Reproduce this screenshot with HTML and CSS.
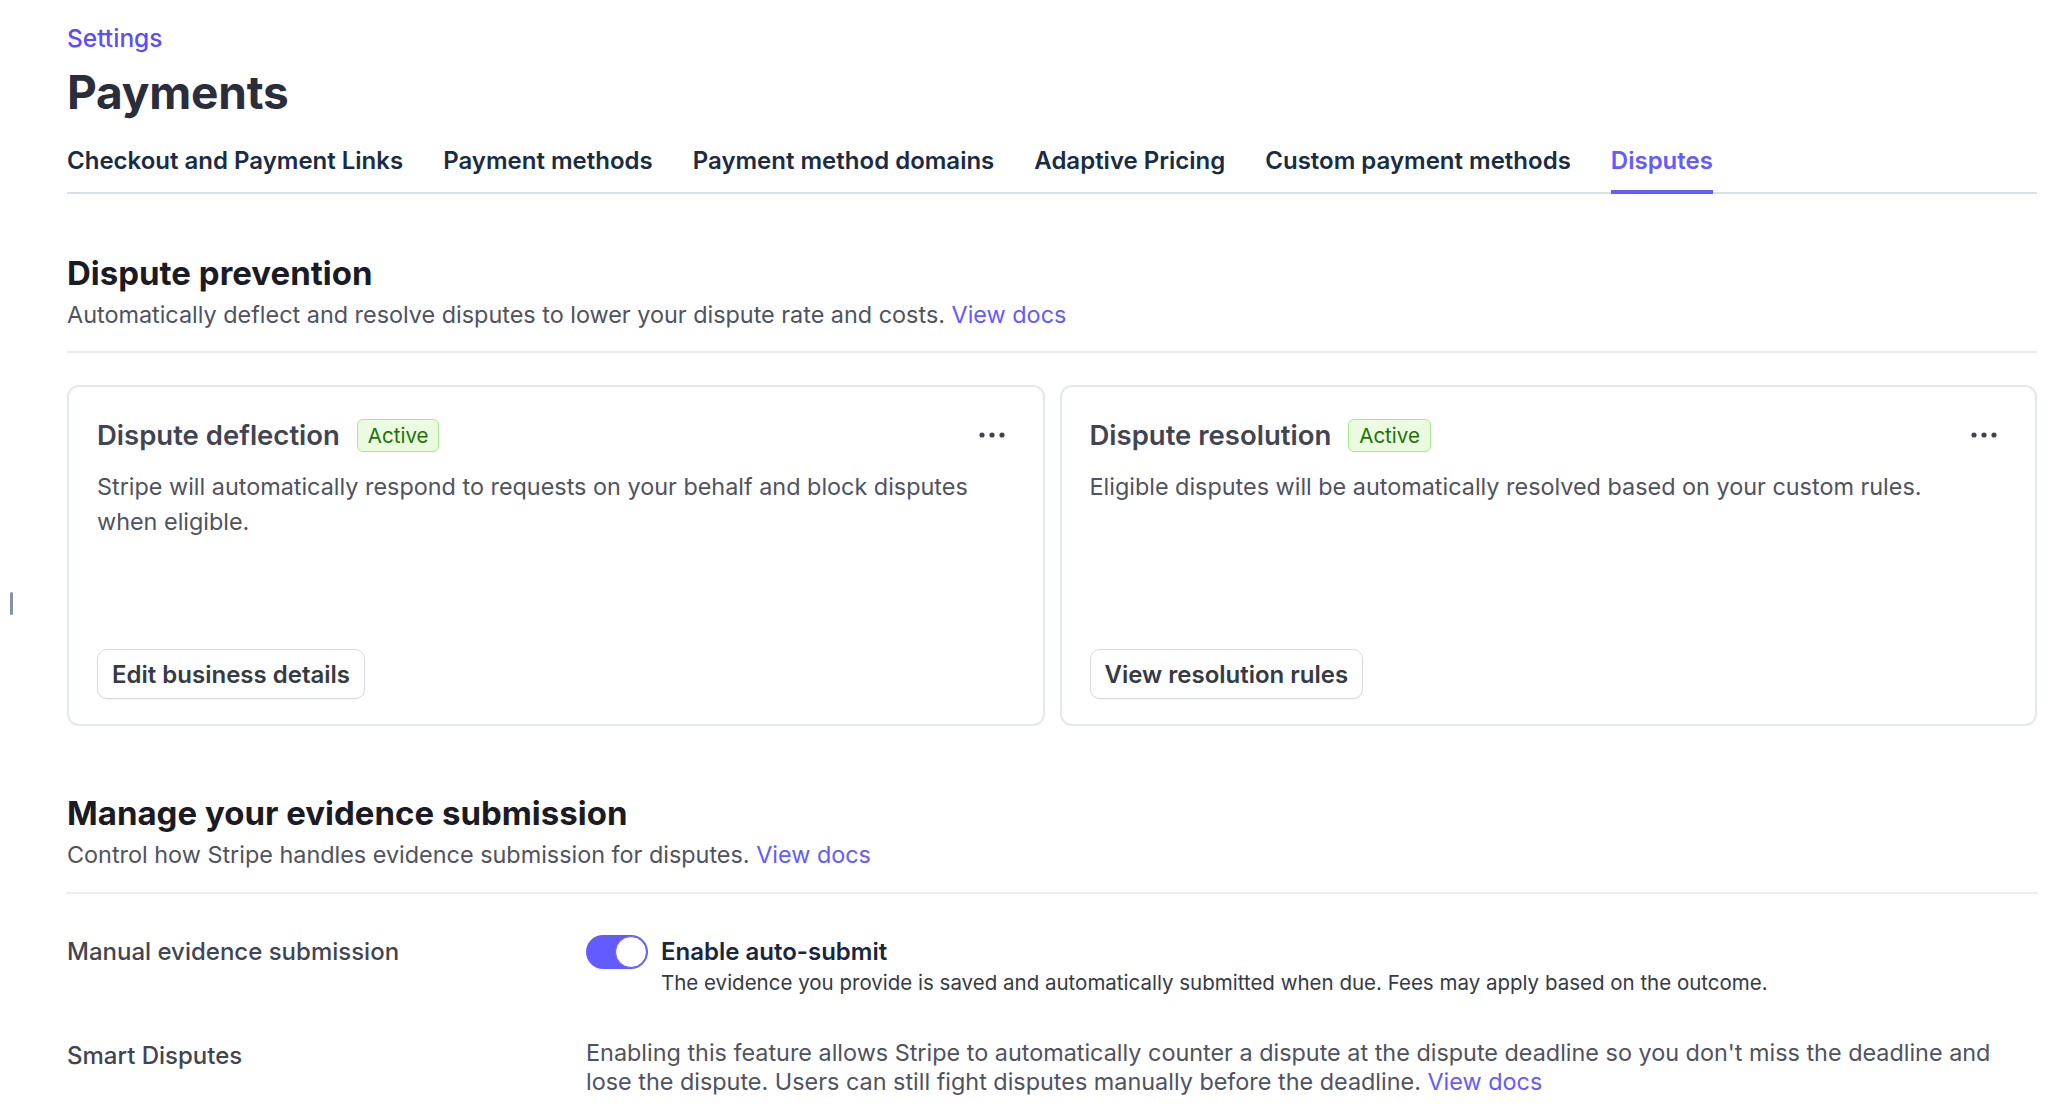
FILE: index.html
```html
<!DOCTYPE html>
<html lang="en">
<head>
    <meta charset="UTF-8">
    <meta name="viewport" content="width=device-width, initial-scale=1.0">
    <title>Payments - Disputes</title>
    <link rel="stylesheet" href="styles.css">
</head>
<body>
    <div class="resize-handle"></div>

    <main class="page">
        <a class="crumb" href="#">Settings</a>
        <h1 class="page-title">Payments</h1>

        <nav class="tabs">
            <a class="tab" href="#">Checkout and Payment Links</a>
            <a class="tab" href="#">Payment methods</a>
            <a class="tab" href="#">Payment method domains</a>
            <a class="tab" href="#">Adaptive Pricing</a>
            <a class="tab" href="#">Custom payment methods</a>
            <a class="tab active" href="#">Disputes</a>
        </nav>

        <!-- Dispute prevention -->
        <section class="section">
            <h2 class="section-title">Dispute prevention</h2>
            <p class="section-desc">Automatically deflect and resolve disputes to lower your dispute rate and costs. <a href="#">View docs</a></p>
        </section>

        <div class="cards">
            <div class="card">
                <div class="card-head">
                    <h3 class="card-title">Dispute deflection</h3>
                    <span class="badge">Active</span>
                    <button class="more" type="button" aria-label="More">
                        <svg width="26" height="6" viewBox="0 0 26 6"><circle cx="3" cy="3" r="2.6"/><circle cx="13" cy="3" r="2.6"/><circle cx="23" cy="3" r="2.6"/></svg>
                    </button>
                </div>
                <p class="card-desc">Stripe will automatically respond to requests on your behalf and block disputes when eligible.</p>
                <button class="btn" type="button">Edit business details</button>
            </div>

            <div class="card">
                <div class="card-head">
                    <h3 class="card-title">Dispute resolution</h3>
                    <span class="badge">Active</span>
                    <button class="more" type="button" aria-label="More">
                        <svg width="26" height="6" viewBox="0 0 26 6"><circle cx="3" cy="3" r="2.6"/><circle cx="13" cy="3" r="2.6"/><circle cx="23" cy="3" r="2.6"/></svg>
                    </button>
                </div>
                <p class="card-desc">Eligible disputes will be automatically resolved based on your custom rules.</p>
                <button class="btn" type="button">View resolution rules</button>
            </div>
        </div>

        <!-- Evidence submission -->
        <section class="section second">
            <h2 class="section-title">Manage your evidence submission</h2>
            <p class="section-desc">Control how Stripe handles evidence submission for disputes. <a href="#">View docs</a></p>
        </section>

        <div class="setting-row">
            <div class="setting-label">Manual evidence submission</div>
            <div class="setting-value">
                <div class="toggle-line">
                    <span class="toggle on"><span class="knob"></span></span>
                    <span class="toggle-label">Enable auto-submit</span>
                </div>
                <p class="toggle-help">The evidence you provide is saved and automatically submitted when due. Fees may apply based on the outcome.</p>
            </div>
        </div>

        <div class="setting-row smart">
            <div class="setting-label">Smart Disputes</div>
            <div class="setting-value">
                <p class="setting-text">Enabling this feature allows Stripe to automatically counter a dispute at the dispute deadline so you don't miss the deadline and lose the dispute. Users can still fight disputes manually before the deadline. <a href="#">View docs</a></p>
            </div>
        </div>
    </main>
</body>
</html>
```

FILE: styles.css
```css
body {
    margin: 0;
    font-family: Inter, "Noto Sans", sans-serif;
    background-color: #fff;
    color: #414552;
}

a {
    color: #635bff;
    text-decoration: none;
}

p {
    margin: 0;
}

/* Sidebar resize handle */
.resize-handle {
    position: absolute;
    left: 10px;
    top: 592px;
    width: 3px;
    height: 23px;
    border-radius: 2px;
    background-color: #8792a8;
}

.page {
    padding: 24px 11px 0 67px;
}

/* Header */
.crumb {
    display: block;
    font-size: 24.5px;
    font-weight: 500;
    line-height: 28px;
    color: #5b4cff;
}

.page-title {
    margin: 12px 0 0;
    font-size: 46px;
    font-weight: 700;
    line-height: 56px;
    color: #2b2d3a;
    letter-spacing: -0.2px;
}

/* Tabs */
.tabs {
    display: flex;
    gap: 40px;
    margin-top: 26px;
    border-bottom: 2px solid #d8e0ea;
}

.tab {
    display: block;
    padding-bottom: 14px;
    margin-bottom: -2px;
    border-bottom: 4px solid transparent;
    font-size: 24px;
    font-weight: 600;
    line-height: 30px;
    color: #1a2c44;
}

.tab.active {
    color: #635bff;
    border-bottom-color: #635bff;
}

/* Sections */
.section {
    margin-top: 59px;
    padding-bottom: 21px;
    border-bottom: 2px solid #ebeef1;
}

.section.second {
    margin-top: 67px;
    padding-bottom: 22px;
}

.section-title {
    margin: 0;
    font-size: 33px;
    font-weight: 700;
    line-height: 40px;
    color: #1a1b25;
}

.section-desc {
    margin-top: 7px;
    font-size: 23.4px;
    line-height: 30px;
    color: #50535e;
}

/* Cards */
.cards {
    display: grid;
    grid-template-columns: 1fr 1fr;
    gap: 15px;
    margin-top: 32px;
}

.card {
    display: flex;
    flex-direction: column;
    align-items: flex-start;
    height: 341px;
    box-sizing: border-box;
    padding: 31px 28px 25px;
    border: 2px solid #e3e8ee;
    border-radius: 12px;
}

.card-head {
    display: flex;
    align-items: center;
    width: 100%;
}

.card-title {
    margin: 0 17px 0 0;
    font-size: 27.5px;
    font-weight: 600;
    line-height: 34px;
    color: #414552;
}

.badge {
    padding: 0 10px;
    height: 31px;
    line-height: 31px;
    border: 1.5px solid #a6e88a;
    border-radius: 6px;
    background-color: #eafbe0;
    color: #217005;
    font-size: 20.5px;
}

.more {
    margin-left: auto;
    margin-right: 10px;
    padding: 0;
    border: none;
    background: none;
    fill: #414552;
    line-height: 0;
}

.card-desc {
    margin-top: 17px;
    font-size: 23.4px;
    line-height: 35px;
    color: #50535e;
}

.btn {
    margin-top: auto;
    height: 50px;
    padding: 0 14px;
    border: 1.5px solid #d5dbe1;
    border-radius: 10px;
    background-color: #fff;
    font-family: inherit;
    font-size: 24px;
    font-weight: 600;
    color: #353a44;
    box-shadow: 0 1px 1px rgba(0, 0, 0, 0.04);
}

/* Settings rows */
.setting-row {
    display: grid;
    grid-template-columns: 519px 1fr;
    margin-top: 41px;
}

.setting-label {
    font-size: 24px;
    font-weight: 500;
    line-height: 34px;
    color: #414552;
}

.smart .setting-label {
    line-height: 29px;
    padding-top: 3px;
}

.toggle-line {
    display: flex;
    align-items: center;
    gap: 13px;
}

.toggle {
    position: relative;
    width: 62px;
    height: 34px;
    border-radius: 17px;
    background-color: #635bff;
}

.knob {
    position: absolute;
    right: 1px;
    top: 1px;
    width: 30px;
    height: 30px;
    border: 1px solid #635bff;
    border-radius: 50%;
    background-color: #fff;
}

.toggle-label {
    font-size: 24px;
    font-weight: 600;
    line-height: 34px;
    color: #1a2540;
}

.toggle-help {
    margin-left: 75px;
    font-size: 20.5px;
    line-height: 28px;
    color: #353a44;
}

.setting-text {
    padding-right: 20px;
    font-size: 23.4px;
    line-height: 29px;
    color: #50535e;
}
```
